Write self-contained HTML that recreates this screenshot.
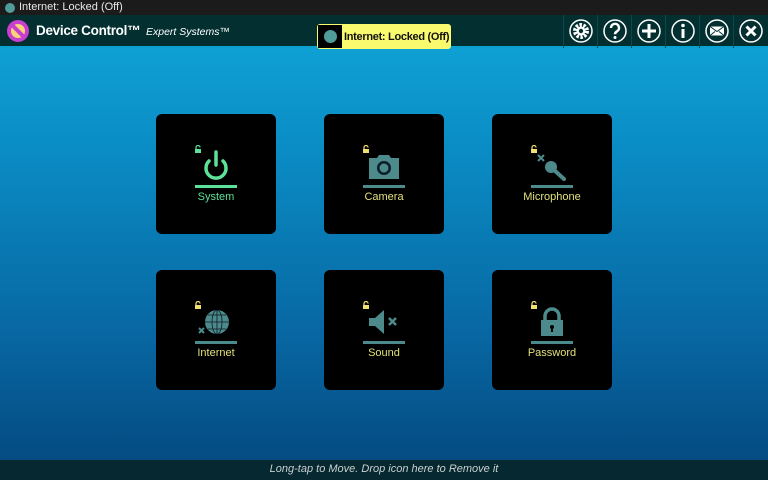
<!DOCTYPE html>
<html><head><style>
*{margin:0;padding:0;box-sizing:border-box}
body{width:768px;height:480px;overflow:hidden;font-family:"Liberation Sans",sans-serif;position:relative;background:linear-gradient(#11aadb 0px,#0a8cc4 150px,#0868a3 330px,#044b82 460px)}
#sb{position:absolute;left:0;top:0;width:768px;height:15px;background:#1b1b1b;color:#e8e8e8;font-size:11px;line-height:15px;padding-left:19px}
#hd{position:absolute;left:0;top:15px;width:768px;height:33px;background:#032f30;border-bottom:2px solid #0aa0d0}
.t{position:absolute;color:#fff;font-weight:bold;font-size:13.5px;top:8px;left:36px;white-space:nowrap;letter-spacing:-0.3px}
.s{position:absolute;color:#fff;font-style:italic;font-size:10.5px;top:11px;left:146px;white-space:nowrap}
#bd{position:absolute;left:317px;top:9px;width:134px;height:25px;background:#fafa6e;border-radius:3px;font-size:11px;font-weight:bold;color:#111;line-height:27px;padding-left:27px;white-space:nowrap;letter-spacing:-0.3px}
#bd i{position:absolute;left:1px;top:1px;width:24px;height:23px;background:#000}
#bd i:after{content:"";position:absolute;left:6px;top:5px;width:13px;height:13px;border-radius:50%;background:#4f9c9a}
.btn{position:absolute;top:0;width:34px;height:33px;border-left:1px solid #0b4a4a}
.btn svg{position:absolute;left:5px;top:4px}
.tile{position:absolute;width:120px;height:120px;background:#000;border-radius:6px}
.tile .ln{position:absolute;left:39px;top:71px;width:42px;height:3px;background:#4d8a8c}
.tile .lb{position:absolute;left:0;width:120px;top:77px;text-align:center;font-size:11px;color:#e3e07a}
.tile .lk{position:absolute;left:38px;top:31px}
.tile svg.ic{position:absolute;left:40px;top:34px}
#ft{position:absolute;left:0;top:460px;width:768px;height:20px;background:#062830;color:#c8d0d0;font-style:italic;font-size:11px;text-align:center;line-height:18px}
</style></head><body>
<div id="sb"><span style="position:absolute;left:5px;top:3px;width:10px;height:10px;border-radius:50%;background:#4f9c9a"></span>Internet: Locked (Off)</div>
<div id="hd">
<svg style="position:absolute;left:7px;top:5px" width="22" height="22"><circle cx="11" cy="11" r="9" fill="#f9d27a" stroke="#c83fd0" stroke-width="4"/><line x1="5" y1="5" x2="17" y2="17" stroke="#c83fd0" stroke-width="4"/></svg>
<div class="t">Device Control™</div><div class="s">Expert Systems™</div>
<div id="bd"><i></i>Internet: Locked (Off)</div>
<div class="btn" style="left:563px"><svg width="24" height="24"><circle cx="12" cy="12" r="11" fill="none" stroke="#fff" stroke-width="1.5"/><circle cx="12" cy="12" r="6" fill="none" stroke="#fff" stroke-width="4" stroke-dasharray="2.4 1.4"/><circle cx="12" cy="12" r="4.5" fill="#fff"/><circle cx="12" cy="12" r="2.2" fill="#032f30"/></svg></div>
<div class="btn" style="left:597px"><svg width="24" height="24"><circle cx="12" cy="12" r="11" fill="none" stroke="#fff" stroke-width="1.5"/><path d="M8 9a4 4 0 1 1 6 3.3c-1.5 1-2 1.5-2 3" fill="none" stroke="#fff" stroke-width="2.5"/><circle cx="12" cy="18.5" r="1.5" fill="#fff"/></svg></div>
<div class="btn" style="left:631px"><svg width="24" height="24"><circle cx="12" cy="12" r="11" fill="none" stroke="#fff" stroke-width="1.5"/><path d="M12 5v14M5 12h14" stroke="#fff" stroke-width="3"/></svg></div>
<div class="btn" style="left:665px"><svg width="24" height="24"><circle cx="12" cy="12" r="11" fill="none" stroke="#fff" stroke-width="1.5"/><circle cx="12" cy="6.5" r="1.8" fill="#fff"/><path d="M12 10v9" stroke="#fff" stroke-width="3"/></svg></div>
<div class="btn" style="left:699px"><svg width="24" height="24"><circle cx="12" cy="12" r="11" fill="none" stroke="#fff" stroke-width="1.5"/><rect x="5" y="7.5" width="14" height="9" fill="#fff"/><path d="M5 7.5l7 5 7-5M5 16.5l5-4M19 16.5l-5-4" stroke="#032f30" fill="none"/></svg></div>
<div class="btn" style="left:733px"><svg width="24" height="24"><circle cx="12" cy="12" r="11" fill="none" stroke="#fff" stroke-width="1.5"/><path d="M7.5 7.5l9 9M16.5 7.5l-9 9" stroke="#fff" stroke-width="3"/></svg></div>
</div>

<div class="tile" style="left:156px;top:114px">
<svg class="lk" width="8" height="8"><rect x="1" y="4" width="6" height="4" fill="#5de09a"/><path d="M2 4V2.5a2 2 0 0 1 4 0" fill="none" stroke="#5de09a" stroke-width="1.2"/></svg>
<svg class="ic" width="40" height="36"><path d="M13 13a10 10 0 1 0 14 0" fill="none" stroke="#5de09a" stroke-width="3.5" stroke-linecap="round"/><path d="M20 4v13" stroke="#5de09a" stroke-width="3.5" stroke-linecap="round"/></svg>
<div class="ln" style="background:#5de09a"></div><div class="lb" style="color:#5de09a">System</div></div>

<div class="tile" style="left:324px;top:114px">
<svg class="lk" width="8" height="8"><rect x="1" y="4" width="6" height="4" fill="#f0e070"/><path d="M2 4V2.5a2 2 0 0 1 4 0" fill="none" stroke="#f0e070" stroke-width="1.2"/></svg>
<svg class="ic" width="40" height="36"><path d="M5 10h8l2-3h10l2 3h8v21H5z" fill="#4d8a8c"/><circle cx="20" cy="20" r="7" fill="#0b1e2a"/><circle cx="20" cy="20" r="4.5" fill="#4d8a8c"/></svg>
<div class="ln"></div><div class="lb">Camera</div></div>

<div class="tile" style="left:492px;top:114px">
<svg class="lk" width="8" height="8"><rect x="1" y="4" width="6" height="4" fill="#f0e070"/><path d="M2 4V2.5a2 2 0 0 1 4 0" fill="none" stroke="#f0e070" stroke-width="1.2"/></svg>
<svg class="ic" width="40" height="36"><path d="M6 7l6 6M12 7l-6 6" stroke="#4d8a8c" stroke-width="2"/><path d="M22 22l10 9" stroke="#4d8a8c" stroke-width="4" stroke-linecap="round"/><circle cx="19" cy="19" r="6" fill="#4d8a8c"/></svg>
<div class="ln"></div><div class="lb">Microphone</div></div>

<div class="tile" style="left:156px;top:270px">
<svg class="lk" width="8" height="8"><rect x="1" y="4" width="6" height="4" fill="#f0e070"/><path d="M2 4V2.5a2 2 0 0 1 4 0" fill="none" stroke="#f0e070" stroke-width="1.2"/></svg>
<svg class="ic" width="40" height="36"><circle cx="21" cy="18" r="12" fill="#4d8a8c"/><path d="M9 18h24M21 6v24M12 11h18M12 25h18" stroke="#0a1a22" stroke-width="0.8" fill="none"/><ellipse cx="21" cy="18" rx="5" ry="12" stroke="#0a1a22" stroke-width="0.8" fill="none"/><path d="M3 24l5 5M8 24l-5 5" stroke="#4d8a8c" stroke-width="2"/></svg>
<div class="ln"></div><div class="lb">Internet</div></div>

<div class="tile" style="left:324px;top:270px">
<svg class="lk" width="8" height="8"><rect x="1" y="4" width="6" height="4" fill="#f0e070"/><path d="M2 4V2.5a2 2 0 0 1 4 0" fill="none" stroke="#f0e070" stroke-width="1.2"/></svg>
<svg class="ic" width="40" height="36"><path d="M5 14h6l9-8v24l-9-8H5z" fill="#4d8a8c"/><path d="M25 14l7 7M32 14l-7 7" stroke="#4d8a8c" stroke-width="2.5"/></svg>
<div class="ln"></div><div class="lb">Sound</div></div>

<div class="tile" style="left:492px;top:270px">
<svg class="lk" width="8" height="8"><rect x="1" y="4" width="6" height="4" fill="#f0e070"/><path d="M2 4V2.5a2 2 0 0 1 4 0" fill="none" stroke="#f0e070" stroke-width="1.2"/></svg>
<svg class="ic" width="40" height="36"><path d="M13 17v-5a7 7 0 0 1 14 0v5" fill="none" stroke="#4d8a8c" stroke-width="3.5"/><rect x="9" y="16" width="22" height="16" fill="#4d8a8c"/><circle cx="20" cy="23" r="2" fill="#000"/><rect x="19" y="23" width="2" height="5" fill="#000"/></svg>
<div class="ln"></div><div class="lb">Password</div></div>

<div id="ft">Long-tap to Move. Drop icon here to Remove it</div>
</body></html>
